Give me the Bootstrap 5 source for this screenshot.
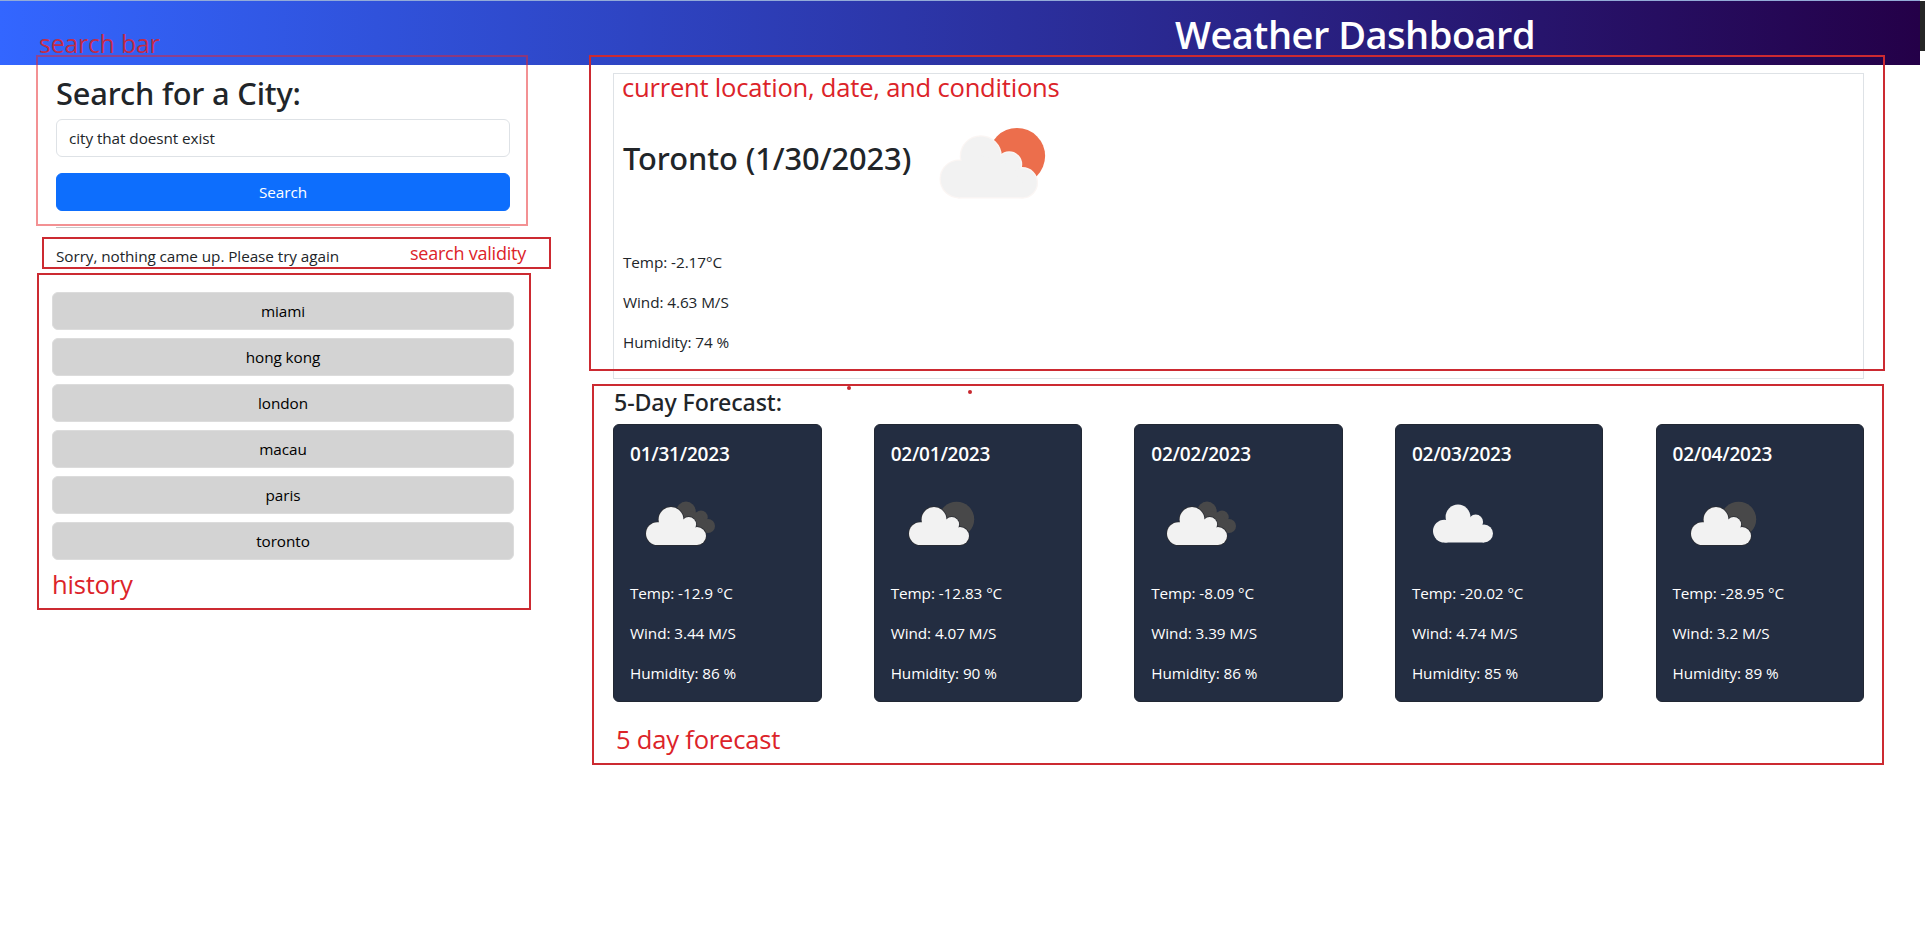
<!DOCTYPE html>
<html lang="en">
<head>
<meta charset="utf-8">
<meta name="viewport" content="width=device-width, initial-scale=1">
<title>Weather Dashboard</title>
<link href="https://cdn.jsdelivr.net/npm/bootstrap@5.3.0/dist/css/bootstrap.min.css" rel="stylesheet">
<style>
  body { font-family: "Open Sans", "Noto Sans", sans-serif; font-size: 15.3px; line-height: 24px; letter-spacing: -.07px; overflow: hidden; color: #212529; }
  h1, h4 { font-weight: 600; }
  h2, h3 { font-family: "Noto Sans", "Open Sans", sans-serif; font-weight: 500; }
  .page { width: 1920px; }
  .topline { height: 1px; background: #93abd8; }
  .hero { height: 64px; background: linear-gradient(90deg, #3366ff 0%, #240048 100%); padding-left: 1175px; }
  .hero h1 { font-size: 38px; line-height: 48px; letter-spacing: -.5px; padding-top: 9px; }
  .search-col { width: 613px; padding: 0 103px 0 56px; }
  .search-col h2 { font-size: 30.8px; line-height: 38.4px; letter-spacing: -.17px; padding-top: 1px; height: 38.4px; }
  .form-control { font-size: inherit; line-height: 24px; letter-spacing: inherit; height: 38px; color: #212529; padding-top: 6px; }
  .btn { font-size: inherit; line-height: 24px; height: 38px; letter-spacing: inherit; }
  .city-list { margin: 0 -4px; }
  .btn-city { background: #d3d3d3; border-color: #dcdcdc; color: #000; }
  .rule { border-top: 1px solid #212529; opacity: .25; margin: 16px 0; }
  .main-col { width: 1251px; }
  .now { height: 306px; padding-left: 9px; }
  .now h2 { font-size: 30.8px; line-height: 38.4px; letter-spacing: -.06px; width: 289px; padding-bottom: 7px; white-space: nowrap; }
  .outlook { font-size: 23.2px; line-height: 28.8px; height: 28.8px; letter-spacing: -.1px; padding-top: 1px; margin: 8px 0 8px 1px; }
  .day { width: 208.5px; background: #232d41; --bs-card-border-color: #212733; }
  .day h4 { font-size: 19px; line-height: 24px; height: 24px; letter-spacing: -.22px; padding-top: 1px; }
  .sun { fill: var(--sun); }
  .halo { fill: var(--halo); stroke: var(--halo); stroke-width: 1.6; }
  .now svg { --sun: #ec6e4c; --halo: #fbf6f4; }
  .now .halo { stroke-width: .9; }
  .day svg { --sun: #484849; --halo: #2b2d33; }
  /* callouts laid over the page */
  .callout { position: absolute; border: 2px solid #cc2a31; pointer-events: none; }
  .callout-soft { border-color: rgba(232, 35, 40, .5); }
  .tag { position: absolute; color: #dc2329; font-size: 25.6px; line-height: 34px; letter-spacing: -.23px; white-space: nowrap; }
  .spot { position: absolute; width: 4px; height: 4px; border-radius: 50%; background: #c8282f; }
  .edge { position: absolute; left: 1920px; top: 1px; width: 5px; height: 50px; background: #262626; }
</style>
</head>
<body>
<svg width="0" height="0" class="position-absolute">
  <defs>
    <g id="cloud">
      <circle cx="29.4" cy="60.6" r="11.4"/><circle cx="43" cy="46.5" r="12.4"/>
      <circle cx="60.7" cy="51.5" r="7.4"/><circle cx="69" cy="63" r="9"/>
      <path d="M29.4 72V50L43 46l17.7 5.5L69 63v9z"/>
    </g>
    <g id="icon-few"><circle class="sun" cx="65.6" cy="46.3" r="17.6"/><use href="#cloud" class="halo"/><use href="#cloud" fill="#f2f2f2"/></g>
    <g id="icon-broken">
      <g fill="#484849"><circle cx="56" cy="38.3" r="9.7"/><circle cx="71" cy="44.3" r="6.7"/><circle cx="78" cy="53" r="7"/><path d="M56 38l15 2 7 13-2 7-20-10z"/></g>
      <g transform="translate(-2)"><use href="#cloud" class="halo"/><use href="#cloud" fill="#f2f2f2"/></g>
    </g>
    <g id="icon-cloud"><use href="#cloud" fill="#f2f2f2" transform="translate(3 -2.5)"/></g>
  </defs>
</svg>

<div class="page">
  <div class="topline"></div>
  <header class="hero text-white"><h1 class="m-0">Weather Dashboard</h1></header>

  <div class="d-flex pt-2">
    <aside class="search-col">
      <h2 class="mb-2">Search for a City:</h2>
      <input class="form-control mb-3" type="text" value="city that doesnt exist">
      <button class="btn btn-primary w-100 d-block">Search</button>
      <div class="rule"></div>
      <p class="mb-4">Sorry, nothing came up. Please try again</p>
      <div class="city-list d-grid gap-2">
        <button class="btn btn-city">miami</button>
        <button class="btn btn-city">hong kong</button>
        <button class="btn btn-city">london</button>
        <button class="btn btn-city">macau</button>
        <button class="btn btn-city">paris</button>
        <button class="btn btn-city">toronto</button>
      </div>
    </aside>

    <main class="main-col">
      <section class="now border py-2">
        <div class="d-flex align-items-center mb-2">
          <h2 class="m-0">Toronto (1/30/2023)</h2>
          <svg width="160" height="160" viewBox="0 0 100 100"><use href="#icon-few"/></svg>
        </div>
        <p>Temp: -2.17°C</p>
        <p>Wind: 4.63 M/S</p>
        <p class="mb-0">Humidity: 74 %</p>
      </section>

      <h3 class="outlook">5-Day Forecast:</h3>
      <section class="d-flex justify-content-between">
        <div class="card day text-white"><div class="card-body">
          <h4 class="mb-2">01/31/2023</h4>
          <svg class="d-block mb-2" width="100" height="100"><use href="#icon-broken"/></svg>
          <p>Temp: -12.9 °C</p><p>Wind: 3.44 M/S</p><p class="mb-0">Humidity: 86 %</p>
        </div></div>
        <div class="card day text-white"><div class="card-body">
          <h4 class="mb-2">02/01/2023</h4>
          <svg class="d-block mb-2" width="100" height="100"><use href="#icon-few"/></svg>
          <p>Temp: -12.83 °C</p><p>Wind: 4.07 M/S</p><p class="mb-0">Humidity: 90 %</p>
        </div></div>
        <div class="card day text-white"><div class="card-body">
          <h4 class="mb-2">02/02/2023</h4>
          <svg class="d-block mb-2" width="100" height="100"><use href="#icon-broken"/></svg>
          <p>Temp: -8.09 °C</p><p>Wind: 3.39 M/S</p><p class="mb-0">Humidity: 86 %</p>
        </div></div>
        <div class="card day text-white"><div class="card-body">
          <h4 class="mb-2">02/03/2023</h4>
          <svg class="d-block mb-2" width="100" height="100"><use href="#icon-cloud"/></svg>
          <p>Temp: -20.02 °C</p><p>Wind: 4.74 M/S</p><p class="mb-0">Humidity: 85 %</p>
        </div></div>
        <div class="card day text-white"><div class="card-body">
          <h4 class="mb-2">02/04/2023</h4>
          <svg class="d-block mb-2" width="100" height="100"><use href="#icon-few"/></svg>
          <p>Temp: -28.95 °C</p><p>Wind: 3.2 M/S</p><p class="mb-0">Humidity: 89 %</p>
        </div></div>
      </section>
    </main>
  </div>
</div>

<div class="edge"></div>
<div class="callout callout-soft" style="left:36px;top:55px;width:492px;height:171px"></div>
<div class="callout" style="left:42px;top:237px;width:509px;height:32px"></div>
<div class="callout" style="left:37px;top:273px;width:494px;height:337px"></div>
<div class="callout" style="left:589px;top:55px;width:1296px;height:316px"></div>
<div class="callout" style="left:592px;top:384px;width:1292px;height:381px"></div>
<div class="spot" style="left:847px;top:386px"></div>
<div class="spot" style="left:968px;top:390px"></div>
<div class="tag" style="left:39px;top:26px;font-size:24.9px;opacity:.85">search bar</div>
<div class="tag" style="left:410px;top:236px;font-size:18px">search validity</div>
<div class="tag" style="left:52px;top:568px">history</div>
<div class="tag" style="left:622px;top:71px">current location, date, and conditions</div>
<div class="tag" style="left:616px;top:723px">5 day forecast</div>
<script src="https://cdn.jsdelivr.net/npm/bootstrap@5.3.0/dist/js/bootstrap.bundle.min.js"></script>
</body>
</html>
